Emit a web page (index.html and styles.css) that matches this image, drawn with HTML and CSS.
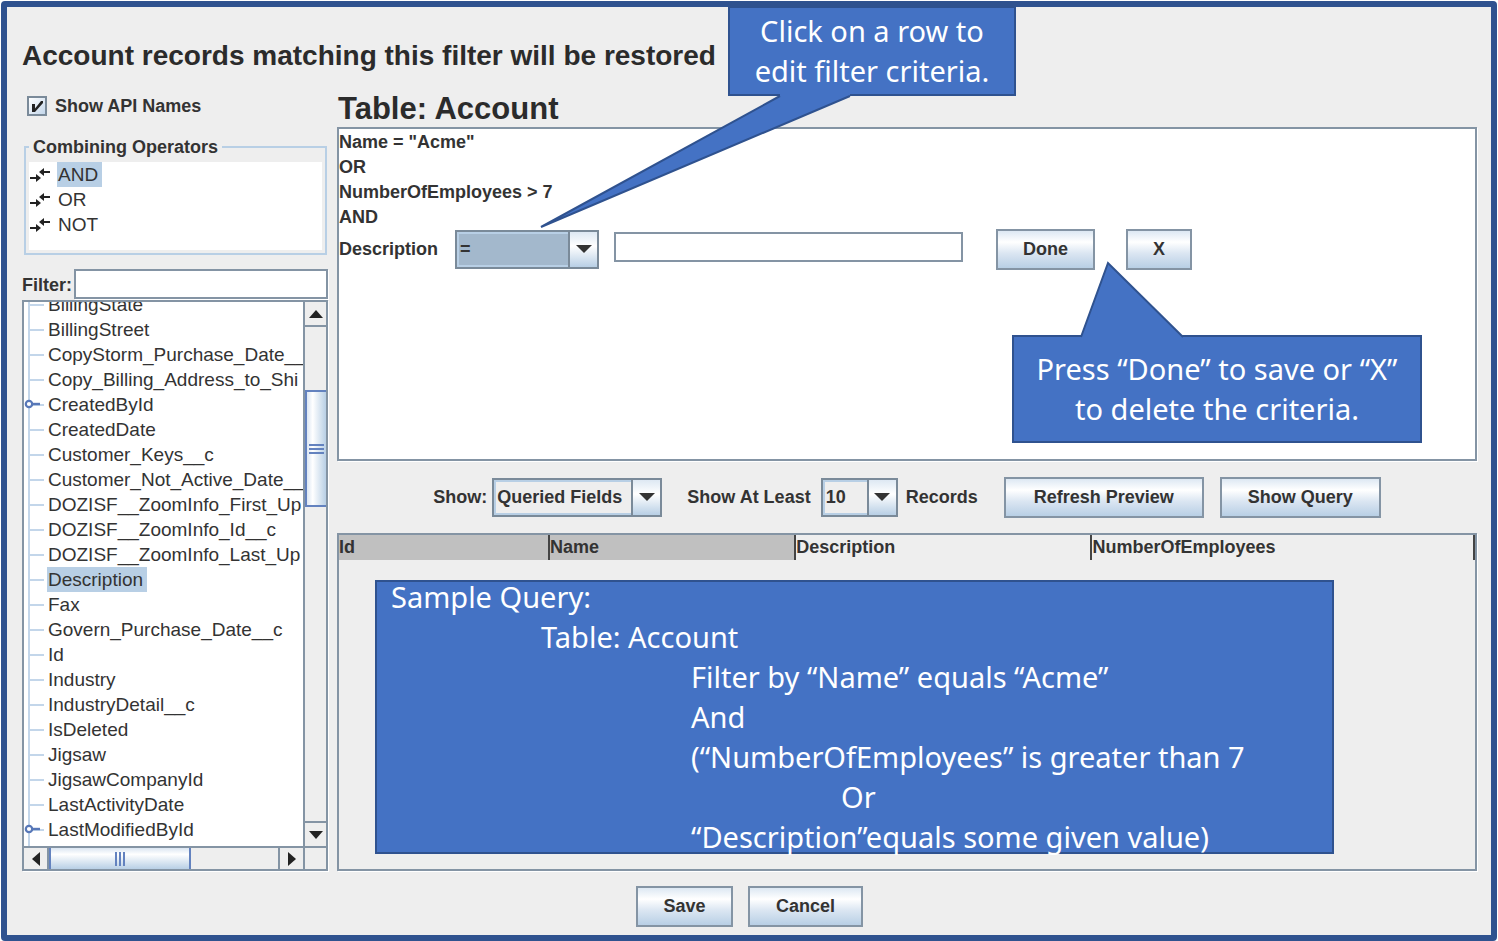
FILE: index.html
```html
<!DOCTYPE html>
<html lang="en">
<head>
<meta charset="utf-8">
<title>Restore filter</title>
<link rel="stylesheet" href="styles.css">
</head>
<body>
<svg class="symbols" aria-hidden="true">
  <symbol id="op" viewBox="0 0 20 14"><path d="M11 4h9M0 10h9" stroke="#222" stroke-width="2" fill="none"/><path d="M9 4l5-4v8zM11 10l-5-4v8z" fill="#222"/></symbol>
  <symbol id="down" viewBox="0 0 18 10"><path d="M1 1h16L9 9z" fill="#333"/></symbol>
  <symbol id="key" viewBox="0 0 16 10"><circle cx="5" cy="5" r="3.2" fill="#fff" stroke="#5878b8" stroke-width="2.2"/><path d="M8 5h8" stroke="#5878b8" stroke-width="2.4"/></symbol>
</svg>
<div class="window">
  <h1 class="title">Account records matching this filter will be restored</h1>
  <main class="main">
    <aside class="side">
      <label class="check"><input type="checkbox" checked><svg class="tick" viewBox="0 0 20 20" aria-hidden="true"><path d="M5 8h3v4.500L14 5h2v2L8 16H5z" fill="#222"/></svg><span>Show API Names</span></label>
      <fieldset class="operators">
        <legend>Combining Operators</legend>
        <ul class="op-list">
          <li><svg class="op-icon"><use href="#op"/></svg><span class="name selected">AND</span></li>
          <li><svg class="op-icon"><use href="#op"/></svg><span class="name">OR</span></li>
          <li><svg class="op-icon"><use href="#op"/></svg><span class="name">NOT</span></li>
        </ul>
      </fieldset>
      <div class="filter"><label for="filter">Filter:</label><input class="field" id="filter" type="text"></div>
      <div class="tree">
        <div class="tree-view">
          <ul class="tree-list">
            <li><span class="name">BillingState</span></li>
            <li><span class="name">BillingStreet</span></li>
            <li><span class="name">CopyStorm_Purchase_Date__</span></li>
            <li><span class="name">Copy_Billing_Address_to_Shi</span></li>
            <li><svg class="key"><use href="#key"/></svg><span class="name">CreatedById</span></li>
            <li><span class="name">CreatedDate</span></li>
            <li><span class="name">Customer_Keys__c</span></li>
            <li><span class="name">Customer_Not_Active_Date__</span></li>
            <li><span class="name">DOZISF__ZoomInfo_First_Up</span></li>
            <li><span class="name">DOZISF__ZoomInfo_Id__c</span></li>
            <li><span class="name">DOZISF__ZoomInfo_Last_Up</span></li>
            <li><span class="name selected">Description</span></li>
            <li><span class="name">Fax</span></li>
            <li><span class="name">Govern_Purchase_Date__c</span></li>
            <li><span class="name">Id</span></li>
            <li><span class="name">Industry</span></li>
            <li><span class="name">IndustryDetail__c</span></li>
            <li><span class="name">IsDeleted</span></li>
            <li><span class="name">Jigsaw</span></li>
            <li><span class="name">JigsawCompanyId</span></li>
            <li><span class="name">LastActivityDate</span></li>
            <li><svg class="key"><use href="#key"/></svg><span class="name">LastModifiedById</span></li>
          </ul>
        </div>
        <div class="vbar">
          <button class="step" aria-label="Scroll up"><svg width="14" height="8" viewBox="0 0 14 8"><path d="M0 8h14L7 0z" fill="#222"/></svg></button>
          <div class="vtrack"><div class="vthumb"><i></i><i></i><i></i></div></div>
          <button class="step last" aria-label="Scroll down"><svg width="14" height="8" viewBox="0 0 14 8"><path d="M0 0h14L7 8z" fill="#222"/></svg></button>
        </div>
        <div class="hbar">
          <button class="step" aria-label="Scroll left"><svg width="8" height="14" viewBox="0 0 8 14"><path d="M8 0v14L0 7z" fill="#222"/></svg></button>
          <div class="htrack"><div class="hthumb"><i></i><i></i><i></i></div></div>
          <button class="step last" aria-label="Scroll right"><svg width="8" height="14" viewBox="0 0 8 14"><path d="M0 0v14L8 7z" fill="#222"/></svg></button>
        </div>
        <div class="corner"></div>
      </div>
    </aside>
    <section class="content">
      <h2 class="table-title">Table: Account</h2>
      <div class="criteria">
        <p>Name = "Acme"</p>
        <p>OR</p>
        <p>NumberOfEmployees &gt; 7</p>
        <p>AND</p>
        <div class="edit-row">
          <label for="op-select">Description</label>
          <span class="combo combo-op"><select id="op-select"><option>=</option></select><span class="arrow"><svg><use href="#down"/></svg></span></span>
          <input class="field value" type="text" aria-label="Value">
          <button class="btn done">Done</button>
          <button class="btn">X</button>
        </div>
        <div class="callout press">
          <svg class="tail" viewBox="0 0 104 78" aria-hidden="true"><path d="M1 76L28 2L103 76V78H1z" fill="#4472c4"/><path d="M1 76L28 2L103 76" fill="none" stroke="#2f528f" stroke-width="2"/></svg>
          <span>Press “Done” to save or “X”<br>to delete the criteria.</span>
        </div>
      </div>
      <div class="toolbar">
        <label for="show">Show:</label>
        <span class="combo combo-show"><select id="show"><option>Queried Fields</option></select><span class="arrow"><svg><use href="#down"/></svg></span></span>
        <label for="count">Show At Least</label>
        <span class="combo combo-count"><select id="count"><option>10</option></select><span class="arrow"><svg><use href="#down"/></svg></span></span>
        <span>Records</span>
        <button class="btn refresh">Refresh Preview</button>
        <button class="btn query">Show Query</button>
      </div>
      <div class="results">
        <table>
          <thead><tr><th class="c-id">Id</th><th class="c-name">Name</th><th class="c-desc">Description</th><th>NumberOfEmployees</th></tr></thead>
        </table>
        <div class="sample">
          <p>Sample Query:</p>
          <p class="in1">Table: Account</p>
          <p class="in2">Filter by “Name” equals “Acme”</p>
          <p class="in2">And</p>
          <p class="in2">(“NumberOfEmployees” is greater than 7</p>
          <p class="in3">Or</p>
          <p class="in2">“Description”equals some given value)</p>
        </div>
      </div>
    </section>
  </main>
  <footer class="footer"><button class="btn save">Save</button><button class="btn cancel">Cancel</button></footer>
  <div class="callout click">
    <svg class="tail" viewBox="0 0 312 134" aria-hidden="true"><path d="M240 2L1 133L310 2V0H240z" fill="#4472c4"/><path d="M240 2L1 133L310 2" fill="none" stroke="#2f528f" stroke-width="2"/></svg>
    <span>Click on a row to<br>edit filter criteria.</span>
  </div>
</div>
</body>
</html>
```
FILE: styles.css
```css
* { box-sizing: border-box; }
body { margin: 0; padding: 1px; background: #fff; color: #333; font: bold 18px/25px "Liberation Sans", Arial, sans-serif; }
h1, h2, p, ul { margin: 0; padding: 0; }
ul { list-style: none; }
button, input, select { font: inherit; color: inherit; margin: 0; }
.symbols { display: none; }

.window { position: relative; display: flex; flex-direction: column; min-height: calc(100vh - 2px); padding: 31px 14px 8px 15px; background: #eee; border: 6px solid #2f528f; border-radius: 4px; }
.title { font-size: 28px; line-height: 36px; white-space: nowrap; color: #2b2b2b; }
.main { display: flex; flex: 1; gap: 9px; padding-top: 16px; }
.side { display: flex; flex-direction: column; width: 306px; flex: none; }
.content { display: flex; flex-direction: column; flex: 1; min-width: 0; }

.check { position: relative; display: flex; align-items: center; gap: 8px; height: 32px; padding-left: 5px; }
.check input { appearance: none; width: 20px; height: 20px; border: 2px solid #7a8a99; background: linear-gradient(135deg, #fff, #c3d6ea); }
.tick { position: absolute; left: 5px; top: 6px; width: 20px; height: 20px; pointer-events: none; }

.operators { min-width: 0; margin: 15px 1px 14px 2px; padding: 5px 3px 3px; border: 2px solid #b8cfe5; }
.operators legend { padding: 0 4px; line-height: 20px; }
.op-list { height: 88px; background: #fff; font-weight: normal; font-size: 19px; }
.op-list li { display: flex; align-items: center; gap: 7px; padding-left: 1px; height: 25px; }
.op-icon { width: 20px; height: 14px; }
.name { line-height: 25px; white-space: nowrap; padding: 0 4px 0 1px; }
.selected { background: #b8cfe5; }

.field { border: 2px solid #8494a4; border-radius: 0; background: #fff; padding: 0 3px; box-shadow: 1px 1px #fff; outline: none; }
.filter { display: flex; align-items: flex-end; gap: 2px; margin-bottom: 1px; }
.filter label { line-height: 28px; }
.filter .field { flex: 1; min-width: 0; height: 30px; }

.tree { flex: 1; display: grid; grid-template: 1fr 23px / minmax(0, 1fr) 23px; border: 2px solid #8494a4; box-shadow: 1px 1px #fff; }
.tree-view { overflow: hidden; background: #fff; }
.tree-list { margin: -10px 0 0 4px; padding-bottom: 4px; border-left: 2px solid #c3d6ea; font-weight: normal; font-size: 19px; }
.tree-list li { position: relative; display: flex; align-items: center; height: 25px; }
.tree-list li::before { content: ""; width: 14px; height: 2px; margin-right: 3px; flex: none; background: #c3d6ea; }
.tree-list .name { height: 25px; }
.key { position: absolute; left: -6px; top: 7px; width: 16px; height: 10px; }
.vbar { display: flex; flex-direction: column; border-left: 2px solid #8494a4; }
.hbar { display: flex; border-top: 2px solid #8494a4; }
.corner { border-top: 2px solid #8494a4; border-left: 2px solid #8494a4; }
.step { display: flex; align-items: center; justify-content: center; flex: none; padding: 0; border: 0 solid #8494a4; background: #eee; }
.vbar .step { height: 25px; border-bottom-width: 2px; }
.vbar .last { border-width: 2px 0 0; }
.hbar .step { width: 25px; border-right-width: 2px; }
.hbar .last { border-width: 0 0 0 2px; }
.vtrack { flex: 1; padding-top: 63px; }
.vthumb { display: flex; flex-direction: column; align-items: center; justify-content: center; gap: 2px; height: 117px; border: 2px solid #6382bf; border-right: 0; background: linear-gradient(90deg, #dbe6f2, #fff 30%, #b8cfe5); }
.vthumb i { width: 15px; height: 2px; background: #6382bf; }
.htrack { flex: 1; }
.hthumb { display: flex; align-items: center; justify-content: center; gap: 2px; width: 62%; height: 100%; border: 2px solid #6382bf; border-width: 0 2px; background: linear-gradient(#dbe6f2, #fff 30%, #b8cfe5); }
.hthumb i { width: 2px; height: 14px; background: #6382bf; }

.table-title { padding-left: 1px; font-size: 31px; line-height: 37px; color: #2b2b2b; }
.criteria { position: relative; min-height: 334px; padding-top: 1px; border: 2px solid #8494a4; background: #fff; box-shadow: 1px 1px #fff; }
.edit-row { display: flex; align-items: center; height: 38px; }
.edit-row label { width: 116px; }
.combo { display: inline-grid; grid-template-columns: 1fr 29px; height: 39px; border: 2px solid #7a8a99; flex: none; }
.combo select { grid-area: 1 / 1 / 2 / 3; appearance: none; width: 100%; height: 100%; padding: 0 30px 0 1px; border: 2px solid #b8cfe5; border-radius: 0; background: #eee; outline: none; }
.arrow { grid-area: 1 / 2; display: flex; align-items: center; justify-content: center; border-left: 2px solid #7a8a99; background: linear-gradient(#dde8f3, #fff 40%, #b8cfe5); pointer-events: none; }
.arrow svg { width: 18px; height: 10px; }
.combo-op { width: 144px; }
.combo-op select { background: #a3b8cc; }
.value { width: 349px; height: 30px; margin: 0 33px 4px 15px; }
.btn { height: 41px; padding: 0 25px; border: 2px solid #8494a4; border-radius: 0; background: linear-gradient(#dde8f3, #fff 30%, #dbe6f2 60%, #b8cfe5); white-space: nowrap; }
.done { margin-right: 31px; }

.toolbar { display: flex; align-items: center; justify-content: center; height: 72px; }
.combo-show { width: 170px; margin: 0 25px 0 5px; }
.combo-count { width: 77px; margin: 0 8px 0 10px; }
.refresh { width: 200px; margin: 0 16px 0 26px; }
.query { width: 161px; }

.results { position: relative; flex: 1; min-height: 338px; border: 2px solid #8494a4; box-shadow: 1px 1px #fff; }
.results table { width: 100%; table-layout: fixed; border-collapse: collapse; }
.results th { height: 25px; padding: 0; text-align: left; border-right: 2px solid #444; }
.c-id { width: 18.5%; background: #c0c0c0; }
.c-name { width: 21.7%; background: #c0c0c0; }
.c-desc { width: 26.1%; }

.sample, .callout { position: absolute; background: #4472c4; border: 2px solid #2f528f; color: #fff; font: 29px/40px "Noto Sans", Calibri, sans-serif; white-space: nowrap; }
.sample { left: 36px; right: 141px; top: 45px; height: 274px; padding-left: 14px; display: flex; flex-direction: column; justify-content: center; }
.in1 { padding-left: 150px; }
.in2 { padding-left: 300px; }
.in3 { padding-left: 450px; }
.callout { display: flex; align-items: center; justify-content: center; text-align: center; }
.click { left: 721px; top: -1px; width: 288px; height: 90px; }
.click .tail { position: absolute; left: -190px; top: 86px; width: 312px; height: 134px; }
.press { left: 673px; top: 206px; width: 410px; height: 108px; }
.press .tail { position: absolute; left: 66px; top: -76px; width: 104px; height: 78px; }

.footer { display: flex; justify-content: center; gap: 15px; padding-top: 15px; }
.save { width: 97px; }
.cancel { width: 115px; }
```
